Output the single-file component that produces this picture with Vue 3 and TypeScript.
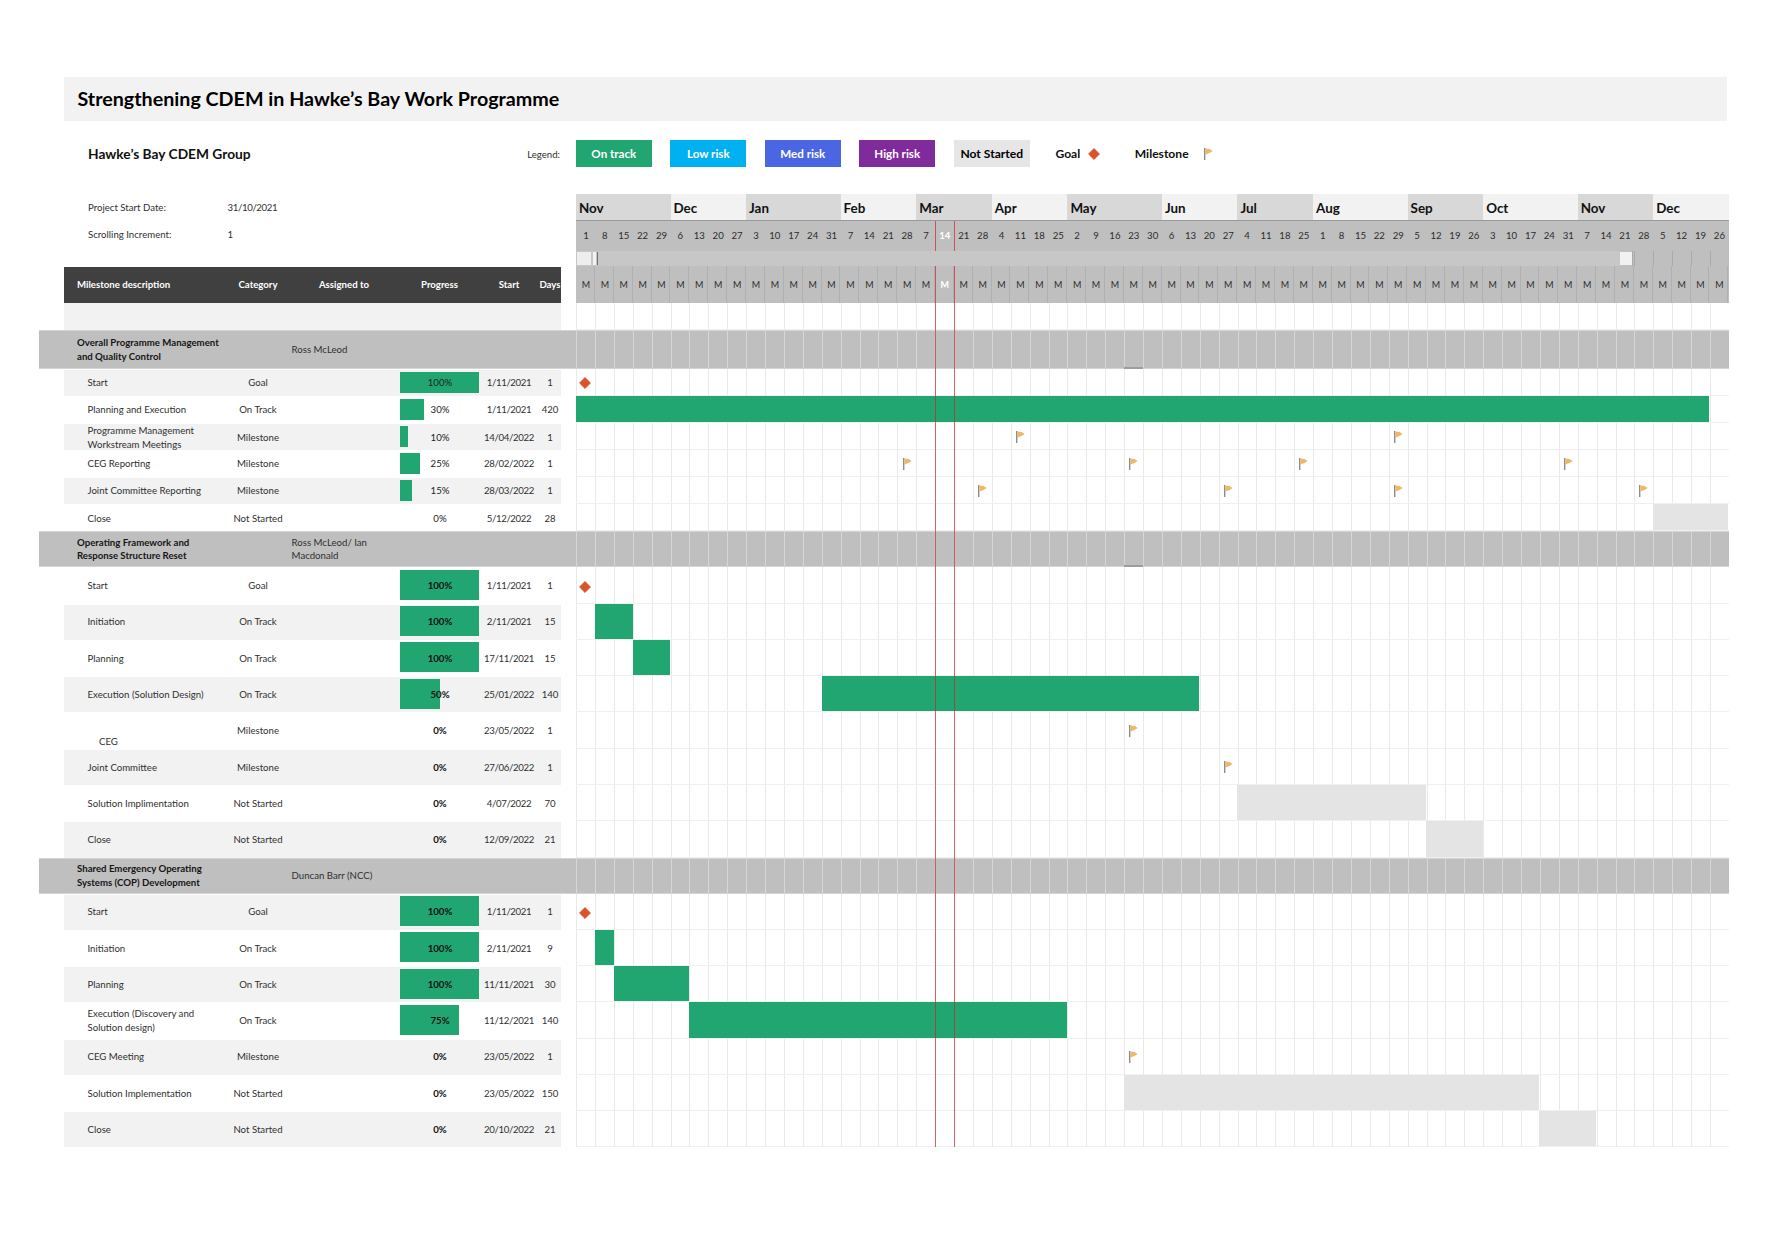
<script setup lang="ts">
type BarKind = 'bar-on' | 'bar-idle'
interface Task {
  name: string
  category: string
  pct: number
  start: string
  days: number
  bar?: [number, number, BarKind]
  flags?: number[]
  goal?: boolean
  footnote?: boolean
}
interface Section {
  title: string
  owner: string
  size: 'compact' | 'tall'
  firstShaded: boolean
  tick: boolean
  tasks: Task[]
}
interface Month {
  name: string
  days: number[]
}

const months: Month[] = [
  { name: 'Nov', days: [1, 8, 15, 22, 29] },
  { name: 'Dec', days: [6, 13, 20, 27] },
  { name: 'Jan', days: [3, 10, 17, 24, 31] },
  { name: 'Feb', days: [7, 14, 21, 28] },
  { name: 'Mar', days: [7, 14, 21, 28] },
  { name: 'Apr', days: [4, 11, 18, 25] },
  { name: 'May', days: [2, 9, 16, 23, 30] },
  { name: 'Jun', days: [6, 13, 20, 27] },
  { name: 'Jul', days: [4, 11, 18, 25] },
  { name: 'Aug', days: [1, 8, 15, 22, 29] },
  { name: 'Sep', days: [5, 12, 19, 26] },
  { name: 'Oct', days: [3, 10, 17, 24, 31] },
  { name: 'Nov', days: [7, 14, 21, 28] },
  { name: 'Dec', days: [5, 12, 19, 26] },
]
const weeks: number[] = months.flatMap((m) => m.days)
const todayIndex = 19
const legend = [
  { label: 'On track', cls: 'sw-green' },
  { label: 'Low risk', cls: 'sw-cyan' },
  { label: 'Med risk', cls: 'sw-blue' },
  { label: 'High risk', cls: 'sw-purple' },
  { label: 'Not Started', cls: 'sw-grey' },
]

const sections: Section[] = [
  {
    title: 'Overall Programme Management\nand Quality Control',
    owner: 'Ross McLeod',
    size: 'compact',
    firstShaded: true,
    tick: true,
    tasks: [
      { name: 'Start', category: 'Goal', pct: 100, start: '1/11/2021', days: 1, goal: true },
      { name: 'Planning and Execution', category: 'On Track', pct: 30, start: '1/11/2021', days: 420, bar: [0, 60, 'bar-on'] },
      { name: 'Programme Management\nWorkstream Meetings', category: 'Milestone', pct: 10, start: '14/04/2022', days: 1, flags: [23, 43] },
      { name: 'CEG Reporting', category: 'Milestone', pct: 25, start: '28/02/2022', days: 1, flags: [17, 29, 38, 52] },
      { name: 'Joint Committee Reporting', category: 'Milestone', pct: 15, start: '28/03/2022', days: 1, flags: [21, 34, 43, 56] },
      { name: 'Close', category: 'Not Started', pct: 0, start: '5/12/2022', days: 28, bar: [57, 61, 'bar-idle'] },
    ],
  },
  {
    title: 'Operating Framework and\nResponse Structure Reset',
    owner: 'Ross McLeod/ Ian\nMacdonald',
    size: 'tall',
    firstShaded: false,
    tick: true,
    tasks: [
      { name: 'Start', category: 'Goal', pct: 100, start: '1/11/2021', days: 1, goal: true },
      { name: 'Initiation', category: 'On Track', pct: 100, start: '2/11/2021', days: 15, bar: [1, 3, 'bar-on'] },
      { name: 'Planning', category: 'On Track', pct: 100, start: '17/11/2021', days: 15, bar: [3, 5, 'bar-on'] },
      { name: 'Execution (Solution Design)', category: 'On Track', pct: 50, start: '25/01/2022', days: 140, bar: [13, 33, 'bar-on'] },
      { name: 'CEG', category: 'Milestone', pct: 0, start: '23/05/2022', days: 1, flags: [29], footnote: true },
      { name: 'Joint Committee', category: 'Milestone', pct: 0, start: '27/06/2022', days: 1, flags: [34] },
      { name: 'Solution Implimentation', category: 'Not Started', pct: 0, start: '4/07/2022', days: 70, bar: [35, 45, 'bar-idle'] },
      { name: 'Close', category: 'Not Started', pct: 0, start: '12/09/2022', days: 21, bar: [45, 48, 'bar-idle'] },
    ],
  },
  {
    title: 'Shared Emergency Operating\nSystems (COP) Development',
    owner: 'Duncan Barr (NCC)',
    size: 'tall',
    firstShaded: true,
    tick: false,
    tasks: [
      { name: 'Start', category: 'Goal', pct: 100, start: '1/11/2021', days: 1, goal: true },
      { name: 'Initiation', category: 'On Track', pct: 100, start: '2/11/2021', days: 9, bar: [1, 2, 'bar-on'] },
      { name: 'Planning', category: 'On Track', pct: 100, start: '11/11/2021', days: 30, bar: [2, 6, 'bar-on'] },
      { name: 'Execution (Discovery and\nSolution design)', category: 'On Track', pct: 75, start: '11/12/2021', days: 140, bar: [6, 26, 'bar-on'] },
      { name: 'CEG Meeting', category: 'Milestone', pct: 0, start: '23/05/2022', days: 1, flags: [29] },
      { name: 'Solution Implementation', category: 'Not Started', pct: 0, start: '23/05/2022', days: 150, bar: [29, 51, 'bar-idle'] },
      { name: 'Close', category: 'Not Started', pct: 0, start: '20/10/2022', days: 21, bar: [51, 54, 'bar-idle'] },
    ],
  },
]

const span = (from: number, to: number) => ({ gridColumn: `${from + 1} / ${to + 1}` })
const cell = (col: number) => ({ gridColumn: `${col + 1}` })
const monthSpan = (m: Month) => ({ width: `${m.days.length * 18.9}px` })
</script>

<template>
  <div class="page">
    <h1 class="title">Strengthening CDEM in Hawke’s Bay Work Programme</h1>

    <div class="legend-row">
      <div class="left-part legend-left">
        <span class="group">Hawke’s Bay CDEM Group</span>
        <span class="legend-label">Legend:</span>
      </div>
      <div class="legend">
        <span v-for="item in legend" :key="item.label" class="swatch" :class="item.cls">{{ item.label }}</span>
        <span class="legend-text goal-text">Goal</span>
        <svg class="diamond" viewBox="0 0 12 12"><path d="M6 .6 11.4 6 6 11.4.6 6Z" fill="#d8542b" stroke="#d8542b" stroke-linejoin="round" /></svg>
        <span class="legend-text ms-text">Milestone</span>
        <svg class="flag legend-flag" viewBox="0 0 9 12"><rect width="1.4" height="12" fill="#8c8c8c" /><path d="M1.4.4 5.6 1 8.6 3 5.6 5 1.4 6.4Z" fill="#efb867" /></svg>
      </div>
    </div>

    <div class="board">
      <div class="head">
        <div class="left-part head-left">
          <div class="info">
            <div class="info-row"><span class="info-key">Project Start Date:</span><span class="date">31/10/2021</span></div>
            <div class="info-row"><span class="info-key">Scrolling Increment:</span><span>1</span></div>
          </div>
          <div class="columns table-grid">
            <span class="col-name">Milestone description</span>
            <span class="center">Category</span>
            <span class="center col-owner">Assigned to</span>
            <span class="center">Progress</span>
            <span class="center">Start</span>
            <span class="center">Days</span>
          </div>
        </div>
        <div class="chart-head">
          <div class="months">
            <span v-for="(m, i) in months" :key="i" class="month" :class="{ shaded: i % 2 === 0 }" :style="monthSpan(m)">{{ m.name }}</span>
          </div>
          <div class="week-row dates">
            <span v-for="(d, i) in weeks" :key="i" :class="{ today: i === todayIndex }">{{ d }}</span>
          </div>
          <div class="scroller">
            <div class="track">
              <span class="thumb"></span>
              <span class="sliver"></span>
              <span class="notch"></span>
            </div>
            <span class="end-thumb"></span>
            <span class="scroll-rest"></span>
          </div>
          <div class="week-row letters">
            <span v-for="(d, i) in weeks" :key="i" :class="{ today: i === todayIndex }">M</span>
          </div>
        </div>
      </div>

      <div class="row blank">
        <div class="left-part"><div class="blank-cell"></div></div>
        <div class="chart"></div>
      </div>

      <template v-for="section in sections" :key="section.title">
        <div class="row band" :class="section.size">
          <div class="left-part band-left">
            <strong class="band-title">{{ section.title }}</strong>
            <span class="band-owner">{{ section.owner }}</span>
          </div>
          <div class="chart band-chart">
            <i v-if="section.tick" class="tick" :style="cell(29)"></i>
          </div>
        </div>

        <div v-for="(task, t) in section.tasks" :key="t" class="row task" :class="section.size">
          <div class="left-part">
            <div class="table-grid cells" :class="{ shade: (t % 2 === 0) === section.firstShaded }">
              <span class="task-name" :class="{ footnote: task.footnote }">{{ task.name }}</span>
              <span class="center">{{ task.category }}</span>
              <span></span>
              <div class="progress">
                <i v-if="task.pct > 0" class="progress-bar" :style="{ width: task.pct + '%' }"></i>
                <span class="pct" :class="{ strong: section.size === 'tall' }">{{ task.pct }}%</span>
              </div>
              <span class="center date">{{ task.start }}</span>
              <span class="center">{{ task.days }}</span>
            </div>
          </div>
          <div class="chart">
            <svg v-if="task.goal" class="diamond in-chart" :style="cell(0)" viewBox="0 0 12 12"><path d="M6 .6 11.4 6 6 11.4.6 6Z" fill="#d8542b" stroke="#d8542b" stroke-linejoin="round" /></svg>
            <i v-if="task.bar" class="bar" :class="task.bar[2]" :style="span(task.bar[0], task.bar[1])"></i>
            <svg v-for="f in task.flags" :key="f" class="flag in-chart" :style="cell(f)" viewBox="0 0 9 12"><rect width="1.4" height="12" fill="#8c8c8c" /><path d="M1.4.4 5.6 1 8.6 3 5.6 5 1.4 6.4Z" fill="#efb867" /></svg>
          </div>
        </div>
      </template>

      <i class="today-line first"></i>
      <i class="today-line second"></i>
    </div>
  </div>
</template>

<style scoped>
.page {
  box-sizing: border-box;
  width: 1768px;
  min-height: 1251px;
  padding: 77px 39px 0;
  background: #fff;
  font-family: Lato, "Open Sans", sans-serif;
  color: #303030;
  font-size: 9.65px;
}
.title {
  box-sizing: border-box;
  height: 44px;
  margin: 0 2px 0 25px;
  padding-left: 13.5px;
  background: #f2f2f2;
  color: #000;
  font-size: 19.7px;
  font-weight: 700;
  line-height: 44px;
}
.left-part {
  flex: none;
  box-sizing: border-box;
  width: 537px;
  padding: 0 15px 0 25px;
}
.legend-row {
  display: flex;
  height: 27px;
  margin-top: 19px;
}
.legend-left {
  display: flex;
  align-items: center;
  justify-content: space-between;
  padding-left: 49px;
  padding-right: 16px;
}
.group {
  color: #111;
  font-size: 13.75px;
  font-weight: 700;
}
.legend {
  display: flex;
  align-items: center;
  gap: 18.9px;
}
.swatch {
  width: 75.6px;
  height: 27px;
  color: #fff;
  font-size: 11.6px;
  font-weight: 700;
  line-height: 27px;
  text-align: center;
}
.sw-green { background: #21a671; }
.sw-cyan { background: #00b0f0; }
.sw-blue { background: #4b66e2; }
.sw-purple { background: #7f2b9c; }
.sw-grey { background: #e6e6e6; color: #000; font-size: 12.1px; }
.legend-text {
  color: #111;
  font-size: 12.1px;
  font-weight: 700;
}
.goal-text { margin-left: 7px; }
.diamond {
  display: block;
  width: 12px;
  height: 12px;
}
.legend .diamond { margin-left: -10.8px; }
.ms-text { margin-left: 15.5px; }
.flag {
  display: block;
  width: 9px;
  height: 12px;
}
.legend-flag { margin-left: -3px; }

.board {
  position: relative;
  margin-top: 27px;
}
.head {
  display: flex;
  height: 109px;
}
.head-left {
  display: flex;
  flex-direction: column;
  justify-content: space-between;
}
.info {
  display: flex;
  flex-direction: column;
  gap: 14px;
  padding: 7px 0 0 24px;
}
.info-row {
  display: flex;
  line-height: 13px;
}
.info-key { width: 139.5px; }
.date { letter-spacing: -0.36px; }
.table-grid {
  display: grid;
  grid-template-columns: 154px 80px 102px 79px 60px 22px;
  align-items: center;
  line-height: 13.6px;
}
.center { text-align: center; }
.columns {
  box-sizing: border-box;
  height: 36.5px;
  background: #404040;
  color: #fff;
  font-weight: 700;
}
.col-name { padding-left: 13px; white-space: nowrap; }
.col-owner { padding-right: 10px; }

.chart-head { width: 1153px; }
.months {
  display: flex;
  height: 27px;
  border-bottom: 1px solid #9a9a9a;
  box-sizing: border-box;
}
.month {
  flex: none;
  box-sizing: border-box;
  padding-left: 3px;
  background: #f2f2f2;
  color: #111;
  font-size: 13.4px;
  font-weight: 700;
  line-height: 28px;
}
.month.shaded { background: #d8d8d8; }
.week-row {
  display: grid;
  grid-template-columns: repeat(61, 18.9px);
  background: #bfbfbf;
  color: #2c2c2c;
  text-align: center;
}
.week-row span { padding-left: 1px; }
.dates {
  height: 30px;
  line-height: 30px;
  font-size: 9.6px;
}
.letters {
  height: 37px;
  line-height: 37px;
  font-size: 9px;
}
.letters span { box-shadow: inset -1px 0 #b0b0b0; }
.week-row .today { color: #fff; font-weight: 700; }
.scroller {
  position: relative;
  z-index: 2;
  display: flex;
  height: 15px;
  background: #bfbfbf;
}
.track {
  display: flex;
  flex: none;
  align-items: stretch;
  box-sizing: border-box;
  width: 1044px;
  padding: 1px 0 1px 1px;
  background: #c7c7c7;
}
.thumb { width: 14px; background: #eeeeee; }
.sliver { width: 2.5px; margin-left: 2px; background: #f2f2f2; }
.notch { width: 1px; margin-left: 1.5px; background: #6e6e6e; }
.end-thumb {
  flex: none;
  width: 12.4px;
  margin: 1px 0;
  background: #f1f1f1;
}
.scroll-rest {
  flex: 1;
  background: repeating-linear-gradient(to right, #aaa 0 1px, transparent 1px 18.9px) 2px 0;
}

.row {
  display: flex;
}
.blank { height: 27px; }
.blank .left-part { height: 100%; }
.blank-cell { height: 100%; background: #f2f2f2; }
.compact { height: 27.07px; }
.tall { height: 36.27px; }
.band.compact { height: 39px; }
.band.tall { height: 36px; }
.chart {
  display: grid;
  flex: none;
  grid-template-columns: repeat(61, 18.9px);
  grid-template-rows: 100%;
  box-sizing: border-box;
  width: 1153px;
  background: repeating-linear-gradient(to right, #e9e9e9 0 1px, transparent 1px 18.9px);
  border-bottom: 1.5px solid #f0f0f0;
}
.band {
  background: #bfbfbf;
  box-shadow: inset 0 1px #d4d4d4, inset 0 -1px #d4d4d4;
}
.band-chart {
  background: repeating-linear-gradient(to right, #d6d6d6 0 1px, transparent 1px 18.9px);
  border-bottom: 0;
}
.tick {
  align-self: end;
  height: 2px;
  background: #9d9d9d;
}
.band-left {
  display: flex;
  align-items: center;
  padding-left: 38px;
  line-height: 13.6px;
  white-space: pre-line;
}
.band-title {
  flex: none;
  width: 214.6px;
  color: #151515;
  font-weight: 700;
}
.cells {
  box-sizing: border-box;
  height: 100%;
  border-top: 1.5px solid #fff;
}
.cells.shade { background: #f2f2f2; }
.task-name {
  padding-left: 23.5px;
  white-space: pre-line;
}
.task-name.footnote {
  align-self: end;
  padding-left: 35px;
}
.progress {
  display: grid;
  height: 100%;
}
.progress-bar {
  grid-area: 1 / 1;
  box-sizing: border-box;
  height: 21px;
  margin-top: 1.5px;
  background: #21a671;
}
.tall .progress-bar {
  height: 30px;
  margin-top: 1.5px;
}
.pct {
  grid-area: 1 / 1;
  align-self: center;
  position: relative;
  padding-left: 1px;
  text-align: center;
  color: #222;
}
.pct.strong { color: #111; font-weight: 700; }
.bar.bar-on { background: #21a671; }
.bar.bar-idle { background: #e4e4e4; }
.in-chart {
  grid-row: 1;
  align-self: center;
  margin-top: 2px;
}
.diamond.in-chart { justify-self: center; margin-top: 1px; }
.tall .diamond.in-chart { margin-top: 3px; }
.flag.in-chart { margin-left: 5.5px; }
.today-line {
  position: absolute;
  top: 27px;
  bottom: 0;
  width: 1.7px;
  background: rgba(204, 36, 40, 0.68);
  z-index: 1;
}
.today-line.first { left: 895.8px; }
.today-line.second { left: 914.8px; }
</style>
